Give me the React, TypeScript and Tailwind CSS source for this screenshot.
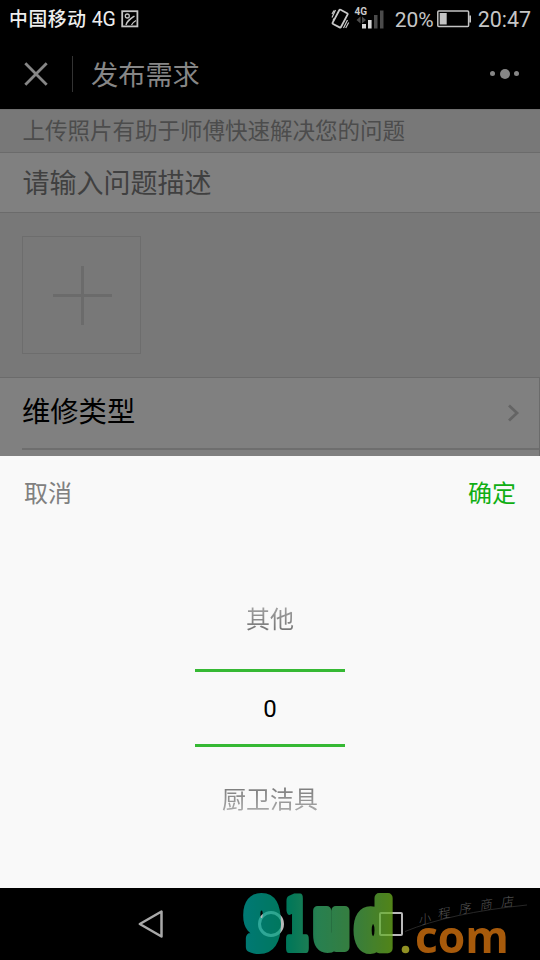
function StatusBar() {
  return (
    <div className="flex h-[38px] items-center bg-black pl-[9px] pr-[9px]">
      <span className="pt-px text-[18.8px] font-medium leading-[38px] tracking-[0.6px] text-[#eeeeee]">
        中国移动 <span className="text-[19.5px] font-normal tracking-[-0.3px]">4G</span>
      </span>
      <svg className="ml-[5.5px]" width="18" height="18" viewBox="0 0 18 18" fill="none" stroke="#c4c4c4">
        <rect x="1.2" y="1.2" width="15.2" height="15.2" strokeWidth="1.8" />
        <circle cx="6.3" cy="6" r="2" strokeWidth="1.3" />
        <path d="M5 15C6 11 8.5 9.5 13.5 6" strokeWidth="1.5" />
        <path d="M10.5 15C11 13 12.5 12 15 10.5" strokeWidth="1.2" />
      </svg>
      <svg className="ml-auto" width="56" height="26" viewBox="330 5 56 26">
        <g fill="none" stroke="#c9c9c9">
          <rect x="334.4" y="9.6" width="9.4" height="16" rx="1" strokeWidth="1.8" transform="rotate(28 339.1 17.6)" />
          <path d="M331 16.5 334.5 9M332 19.5 333 17.5M346.5 19 342.5 27M347.7 21.5 344.7 27M331 13 333 9.5" strokeWidth="1.2" />
        </g>
        <text x="353.5" y="13.6" fontSize="10" fontWeight="700" fill="#c9c9c9" fontFamily="Roboto, sans-serif">
          4G
        </text>
        <path d="M359.5 15.5v7l-4-3.5zM361 15.5v7l4-3.5z" fill="#4b4b4b" />
        <path d="M361 23h4v4.5h-4zM367 19h3.6v8.5H367z" fill="#d6d6d6" />
        <path d="M373 14h3.5v13.5H373zM379 9.5h3.5v18H379z" fill="#4b4b4b" />
      </svg>
      <span className="ml-[8px] pt-px text-[21px] leading-[38px] text-[#c6c6c6]">20%</span>
      <svg className="ml-[3px]" width="35" height="18" viewBox="0 0 35 18">
        <rect x="0.8" y="1" width="30.8" height="15.6" rx="1" fill="none" stroke="#c4c4c4" strokeWidth="1.5" />
        <path d="M2.7 3h7v11.6h-7zM32.3 5.5H34v7h-1.7z" fill="#c4c4c4" />
      </svg>
      <span className="ml-[6px] pt-px text-[21.4px] leading-[38px] text-[#c6c6c6]">20:47</span>
    </div>
  );
}

function TitleBar() {
  return (
    <div className="flex h-[71px] items-center bg-black pl-6 pr-[21px]">
      <svg width="24" height="24" viewBox="0 0 24 24" stroke="#868686" strokeWidth="2.8">
        <path d="M1.3 1.3 22.7 22.7M22.7 1.3 1.3 22.7" />
      </svg>
      <div className="ml-6 h-9 w-px bg-[#333333]" />
      <h1 className="ml-[18px] pt-[5px] text-[27.2px] leading-[71px] text-[#868686]">发布需求</h1>
      <div className="ml-auto flex items-center gap-[4.5px]">
        <span className="size-[5px] rounded-full bg-[#868686]" />
        <span className="size-[10px] rounded-full bg-[#868686]" />
        <span className="size-[5px] rounded-full bg-[#868686]" />
      </div>
    </div>
  );
}

function RequestForm() {
  return (
    <div className="h-[347px] overflow-hidden bg-[#787878]">
      <div className="h-[44px] border-b border-t border-b-[#6b6b6b] border-t-[#6f6f6f] pl-[22.5px] text-[22.5px] leading-[43px] text-[#4c4c4c]">
        上传照片有助于师傅快速解决您的问题
      </div>
      <div className="h-[60px] border-b border-[#6b6b6b] bg-[#808080] pl-[22.5px] text-[27px] leading-[62px] text-[#404040]">
        请输入问题描述
      </div>
      <div className="h-[164px] pl-[22px] pt-[23px]">
        <div className="flex h-[118px] w-[119px] items-center justify-center border border-[#6d6d6d]">
          <svg className="ml-px" width="59" height="59" viewBox="0 0 59 59" stroke="#6b6b6b" strokeWidth="3">
            <path d="M29.5 0v59M0 29.5h59" />
          </svg>
        </div>
      </div>
      <div className="h-[79px] border-r border-t border-[#6b6b6b] bg-[#808080] pl-[22px]">
        <div className="flex h-[72px] items-center justify-between border-b-2 border-[#6e6e6e] pr-[19px]">
          <span className="text-[28.3px] leading-[66px] text-black">维修类型</span>
          <svg width="13" height="18" viewBox="0 0 13 18" fill="none" stroke="#646464" strokeWidth="2.8">
            <path d="M2 1.5 10 9 2 16.5" />
          </svg>
        </div>
      </div>
    </div>
  );
}

function Picker() {
  return (
    <div className="h-[432px] bg-[#f9f9f9] text-2xl">
      <div className="flex h-[74px] items-center justify-between px-6 pt-[2px]">
        <span className="text-[#808080]">取消</span>
        <span className="text-[#0fae12]">确定</span>
      </div>
      <div className="flex flex-col items-center pt-[52px]">
        <div className="h-[87px] bg-gradient-to-b from-[#b0b0b0] from-20% to-[#777777] to-55% bg-clip-text leading-[77px] text-transparent">
          其他
        </div>
        <div className="h-[78px] w-[150px] border-y-[3px] border-[#36b934] text-center leading-[75px] text-black">
          0
        </div>
        <div className="mt-[15px] h-[75px] bg-gradient-to-b from-[#777777] from-30% to-[#b0b0b0] to-70% bg-clip-text leading-[77px] text-transparent">
          厨卫洁具
        </div>
      </div>
    </div>
  );
}

function Watermark() {
  return (
    <svg className="absolute left-[240px] top-0" width="300" height="72" viewBox="240 888 300 72">
      <defs>
        <linearGradient id="brand" gradientUnits="userSpaceOnUse" x1="243" y1="0" x2="393" y2="0">
          <stop offset="0" stopColor="#00a29c" />
          <stop offset="0.3" stopColor="#009f78" />
          <stop offset="0.5" stopColor="#35ab6c" />
          <stop offset="0.75" stopColor="#4ba851" />
          <stop offset="1" stopColor="#6eb020" />
        </linearGradient>
        <mask id="word" maskUnits="userSpaceOnUse" x="240" y="888" width="160" height="72">
          <g
            fill="white"
            stroke="white"
            strokeLinejoin="round"
            fontFamily="'DejaVu Sans Mono', monospace"
            fontWeight="700"
            fontSize="66"
          >
            <text transform="translate(244.5 948) scale(.9 1.02)" strokeWidth="10">9</text>
            <text transform="translate(285.5 948) scale(.56 1.02)" strokeWidth="10">1</text>
            <text transform="translate(313 947) scale(.93 .99)" strokeWidth="10">u</text>
            <text transform="translate(355.5 948) scale(.93 1)" strokeWidth="10">d</text>
          </g>
        </mask>
      </defs>
      <g opacity="0.75">
        <rect x="240" y="888" width="160" height="72" fill="url(#brand)" mask="url(#word)" />
        <circle cx="405.5" cy="949.5" r="3.8" fill="#c2c22f" />
        <text x="415" y="953" fontFamily="'Open Sans', sans-serif" fontSize="45" fontWeight="700" fill="#df780f" textLength="94" lengthAdjust="spacingAndGlyphs">
          com
        </text>
      </g>
      <path d="M405 931.5Q450 913 527 905" fill="none" stroke="#272727" />
      <g fill="#585858" fontSize="12.5" fontWeight="300" fontFamily="'Noto Sans CJK SC', sans-serif">
        <text transform="translate(419 925) rotate(-12) skewX(-12)">小</text>
        <text transform="translate(438 919) rotate(-10) skewX(-12)">程</text>
        <text transform="translate(459 914) rotate(-9) skewX(-12)">序</text>
        <text transform="translate(480 910) rotate(-8) skewX(-12)">商</text>
        <text transform="translate(501 907) rotate(-6) skewX(-12)">店</text>
      </g>
    </svg>
  );
}

function NavigationBar() {
  return (
    <div className="relative flex h-[72px] items-center bg-black pl-[138px]">
      <svg width="25" height="28" viewBox="0 0 25 28" fill="none" stroke="#a9a9a9" strokeWidth="2.5" strokeLinejoin="round">
        <path d="M23.5 1.5v25L1.8 14z" />
      </svg>
      <div className="ml-[95px] size-[26px] rounded-full border-[3px] border-[#b9b9b9]" />
      <div className="ml-[95px] size-6 rounded-[2px] border-2 border-[#b9b9b9]" />
      <Watermark />
    </div>
  );
}

export default function App() {
  return (
    <div className="h-[960px] w-[540px] overflow-hidden bg-black font-['Roboto','Noto_Sans_CJK_SC',sans-serif]">
      <StatusBar />
      <TitleBar />
      <RequestForm />
      <Picker />
      <NavigationBar />
    </div>
  );
}
